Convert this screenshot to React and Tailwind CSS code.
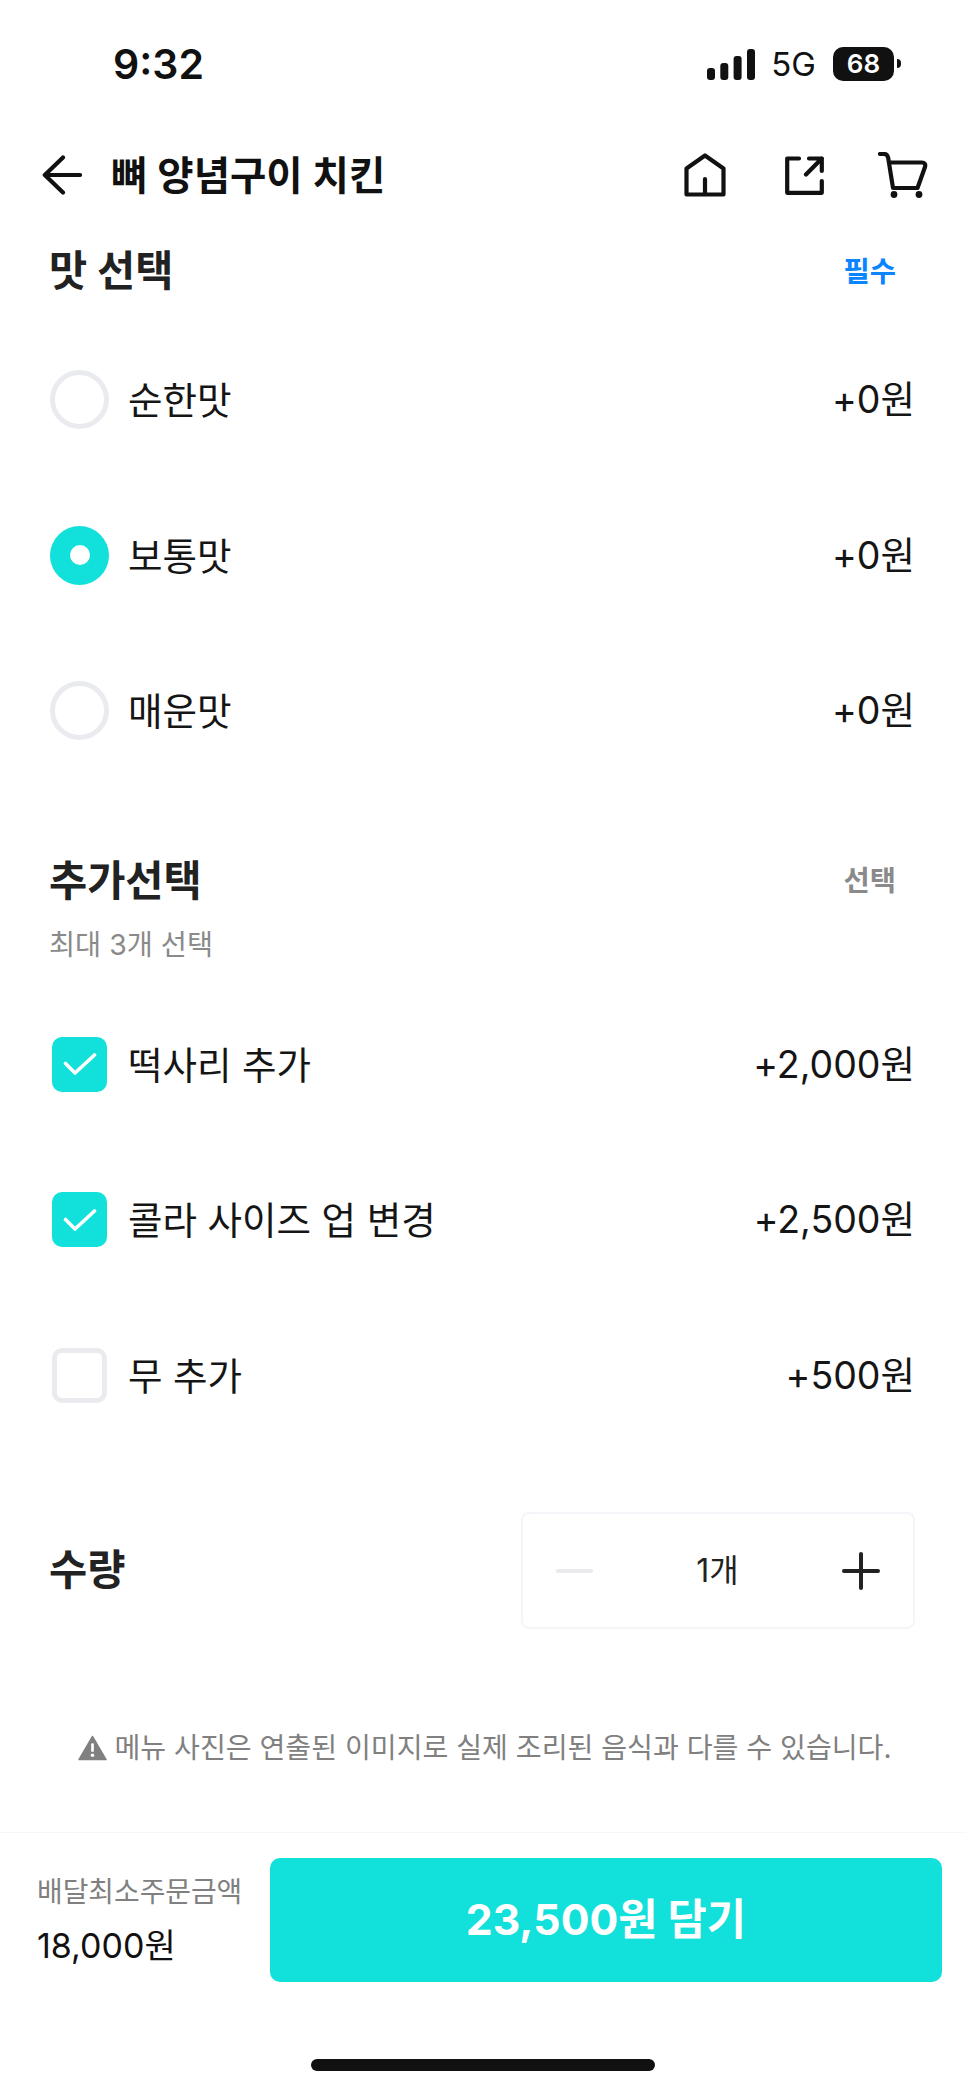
function Radio({ on }) {
  return on ? (
    <span className="flex h-[59px] w-[59px] items-center justify-center rounded-full bg-[#12e0da]">
      <span className="block h-[20px] w-[20px] rounded-full bg-white" />
    </span>
  ) : (
    <span className="block h-[59px] w-[59px] rounded-full border-[5px] border-[#e9ebef] bg-white" />
  );
}
function Check({ on }) {
  return on ? (
    <span className="ml-[2px] flex h-[55px] w-[55px] items-center justify-center rounded-[10px] bg-[#12e0da]">
      <svg width="34" height="24" viewBox="0 0 34 24" fill="none" stroke="#fff" strokeWidth="3.6" strokeLinecap="round" strokeLinejoin="round">
        <path d="M2.5 11.5 L12 21 L31.5 3" />
      </svg>
    </span>
  ) : (
    <span className="ml-[2px] block h-[55px] w-[55px] rounded-[10px] border-[5px] border-[#e9ebef] bg-white" />
  );
}
function Row({ control, label, price }) {
  return (
    <div className="flex h-[155.5px] items-center">
      <span className="flex w-[78px] justify-start">{control}</span>
      <span className="pt-[2px] text-[37.5px] leading-none text-[#151515]">{label}</span>
      <span className="ml-auto text-[37.5px] leading-none text-[#151515]">{price}</span>
    </div>
  );
}
export default function App() {
  return (
    <div className="flex h-[2091px] w-[966px] flex-col overflow-hidden bg-white font-['Inter','Noto_Sans_CJK_KR',sans-serif] text-[#151515]">
      {/* status bar */}
      <div className="flex h-[128px] shrink-0 items-center pl-[113px] pr-[72px]">
        <span className="text-[41px] font-semibold leading-none text-[#111]">9:32</span>
        <div className="ml-auto flex items-center">
          <svg width="48" height="31" viewBox="0 0 48 31" fill="#111">
            <rect x="0" y="19" width="8" height="12" rx="3" />
            <rect x="13.3" y="14" width="8" height="17" rx="3" />
            <rect x="26.6" y="7" width="8" height="24" rx="3" />
            <rect x="40" y="0" width="8" height="31" rx="3" />
          </svg>
          <span className="ml-[16px] text-[33px] leading-none text-[#111]">5G</span>
          <span className="relative ml-[17px] flex h-[34px] w-[61px] items-center justify-center rounded-[10px] bg-[#111] text-[26px] font-semibold leading-none text-white">
            68
            <span className="absolute right-[-7px] top-[12px] h-[9px] w-[4px] rounded-r-full bg-[#111]" />
          </span>
        </div>
      </div>
      {/* nav */}
      <div className="flex h-[94px] shrink-0 items-center pl-[42px] pr-[38px]">
        <svg width="40" height="40" viewBox="0 0 40 40" fill="none" stroke="#111" strokeWidth="4.2" strokeLinecap="round" strokeLinejoin="round">
          <path d="M21 2.5 L2.8 20 L21 37.5 M3 20 H38" />
        </svg>
        <span className="ml-[29px] pt-[3px] text-[39.5px] font-semibold leading-none text-[#111]">뼈 양념구이 치킨</span>
        <div className="ml-auto flex items-center">
          <svg width="42" height="44" viewBox="0 0 42 44" fill="none" stroke="#111" strokeWidth="4.2" strokeLinejoin="round" strokeLinecap="round">
            <path d="M2.5 41.5 V15.5 L21 2.5 L39.5 15.5 V41.5 Z M21 26 V41.5" />
          </svg>
          <svg className="ml-[59px]" width="39" height="39" viewBox="0 0 39 39" fill="none" stroke="#111" strokeWidth="4.2" strokeLinecap="round" strokeLinejoin="round">
            <path d="M14 2.5 H2.2 V36.8 H36.8 V25 M24 2.5 H36.8 V15 M36.8 2.5 L21 18.5" />
          </svg>
          <svg className="ml-[54px]" width="50" height="47" viewBox="0 0 50 47" fill="none" stroke="#111" strokeWidth="4.2" strokeLinecap="round" strokeLinejoin="round">
            <path d="M2 2 H6 C8.5 2 9.7 3.5 10.2 6 L15 36 H39.5 L47 15 C47.8 12 46.5 10.5 44 10.5 H11" />
            <circle cx="16" cy="42.5" r="3.4" fill="#111" stroke="none" />
            <circle cx="41" cy="42.5" r="3.4" fill="#111" stroke="none" />
          </svg>
        </div>
      </div>
      {/* content */}
      <div className="flex flex-1 flex-col pl-[50px] pr-[51px]">
        <div className="flex h-[96px] shrink-0 items-center pt-[4px]">
          <span className="-ml-[1px] text-[41.5px] font-bold leading-none text-[#222]">맛 선택</span>
          <span className="ml-auto mr-[19px] text-[28.5px] font-bold leading-none text-[#0a84ff]">필수</span>
        </div>
        <div className="mt-[4px] flex flex-col">
          <Row control={<Radio />} label="순한맛" price="+0원" />
          <Row control={<Radio on />} label="보통맛" price="+0원" />
          <Row control={<Radio />} label="매운맛" price="+0원" />
        </div>
        <div className="mt-[67px] flex h-[48px] shrink-0 items-center pt-[4px]">
          <span className="-ml-[1px] text-[41.5px] font-bold leading-none text-[#222]">추가선택</span>
          <span className="ml-auto mr-[19px] text-[28.5px] font-bold leading-none text-[#8a8a8a]">선택</span>
        </div>
        <div className="-ml-[1px] mt-[24px] text-[28.4px] leading-[34px] text-[#8a8a8a]">최대 3개 선택</div>
        <div className="mt-[25px] flex flex-col">
          <Row control={<Check on />} label="떡사리 추가" price="+2,000원" />
          <Row control={<Check on />} label="콜라 사이즈 업 변경" price="+2,500원" />
          <Row control={<Check />} label="무 추가" price="+500원" />
        </div>
        <div className="mt-[59px] flex h-[117px] items-center">
          <span className="-ml-[1px] text-[41.5px] font-bold leading-none text-[#222]">수량</span>
          <div className="ml-auto flex h-[117px] w-[394px] items-center rounded-[8px] border-2 border-[#f3f5f8] pl-[33px] pr-[33px]">
            <span className="h-[4px] w-[37px] rounded-full bg-[#e8eaee]" />
            <span className="flex-1 text-center text-[32px] leading-none text-[#222]">1개</span>
            <svg width="38" height="38" viewBox="0 0 38 38" stroke="#222" strokeWidth="4" strokeLinecap="round">
              <path d="M2 19 H36 M19 2 V36" />
            </svg>
          </div>
        </div>
      </div>
      <div className="flex shrink-0 items-center justify-center pb-[66px] pl-[4px]">
        <svg width="29" height="26" viewBox="0 0 30 26">
          <path d="M15 1 L29 25 H1 Z" fill="#808080" stroke="#808080" strokeWidth="1.5" strokeLinejoin="round" />
          <rect x="13.6" y="8" width="2.8" height="9" rx="1" fill="#fff" />
          <circle cx="15" cy="20.5" r="1.8" fill="#fff" />
        </svg>
        <span className="ml-[7px] text-[28.1px] leading-[36px] text-[#808080]">메뉴 사진은 연출된 이미지로 실제 조리된 음식과 다를 수 있습니다.</span>
      </div>
      {/* footer */}
      <div className="flex h-[259px] shrink-0 flex-col border-t border-[#f7f7f7]">
        <div className="mt-[25px] flex h-[124px] pl-[37px] pr-[24px]">
          <div className="flex w-[233px] flex-col">
            <span className="mt-[18px] text-[27.9px] leading-[32px] text-[#808080]">배달최소주문금액</span>
            <span className="mt-[19px] text-[34px] leading-[38px] text-[#111]">18,000원</span>
          </div>
          <button className="flex flex-1 items-center justify-center rounded-[10px] bg-[#12e0da] text-[42.7px] font-bold leading-none text-white">23,500원 담기</button>
        </div>
        <div className="mt-[77px] flex justify-center">
          <span className="h-[12px] w-[344px] rounded-full bg-[#111]" />
        </div>
      </div>
    </div>
  );
}
